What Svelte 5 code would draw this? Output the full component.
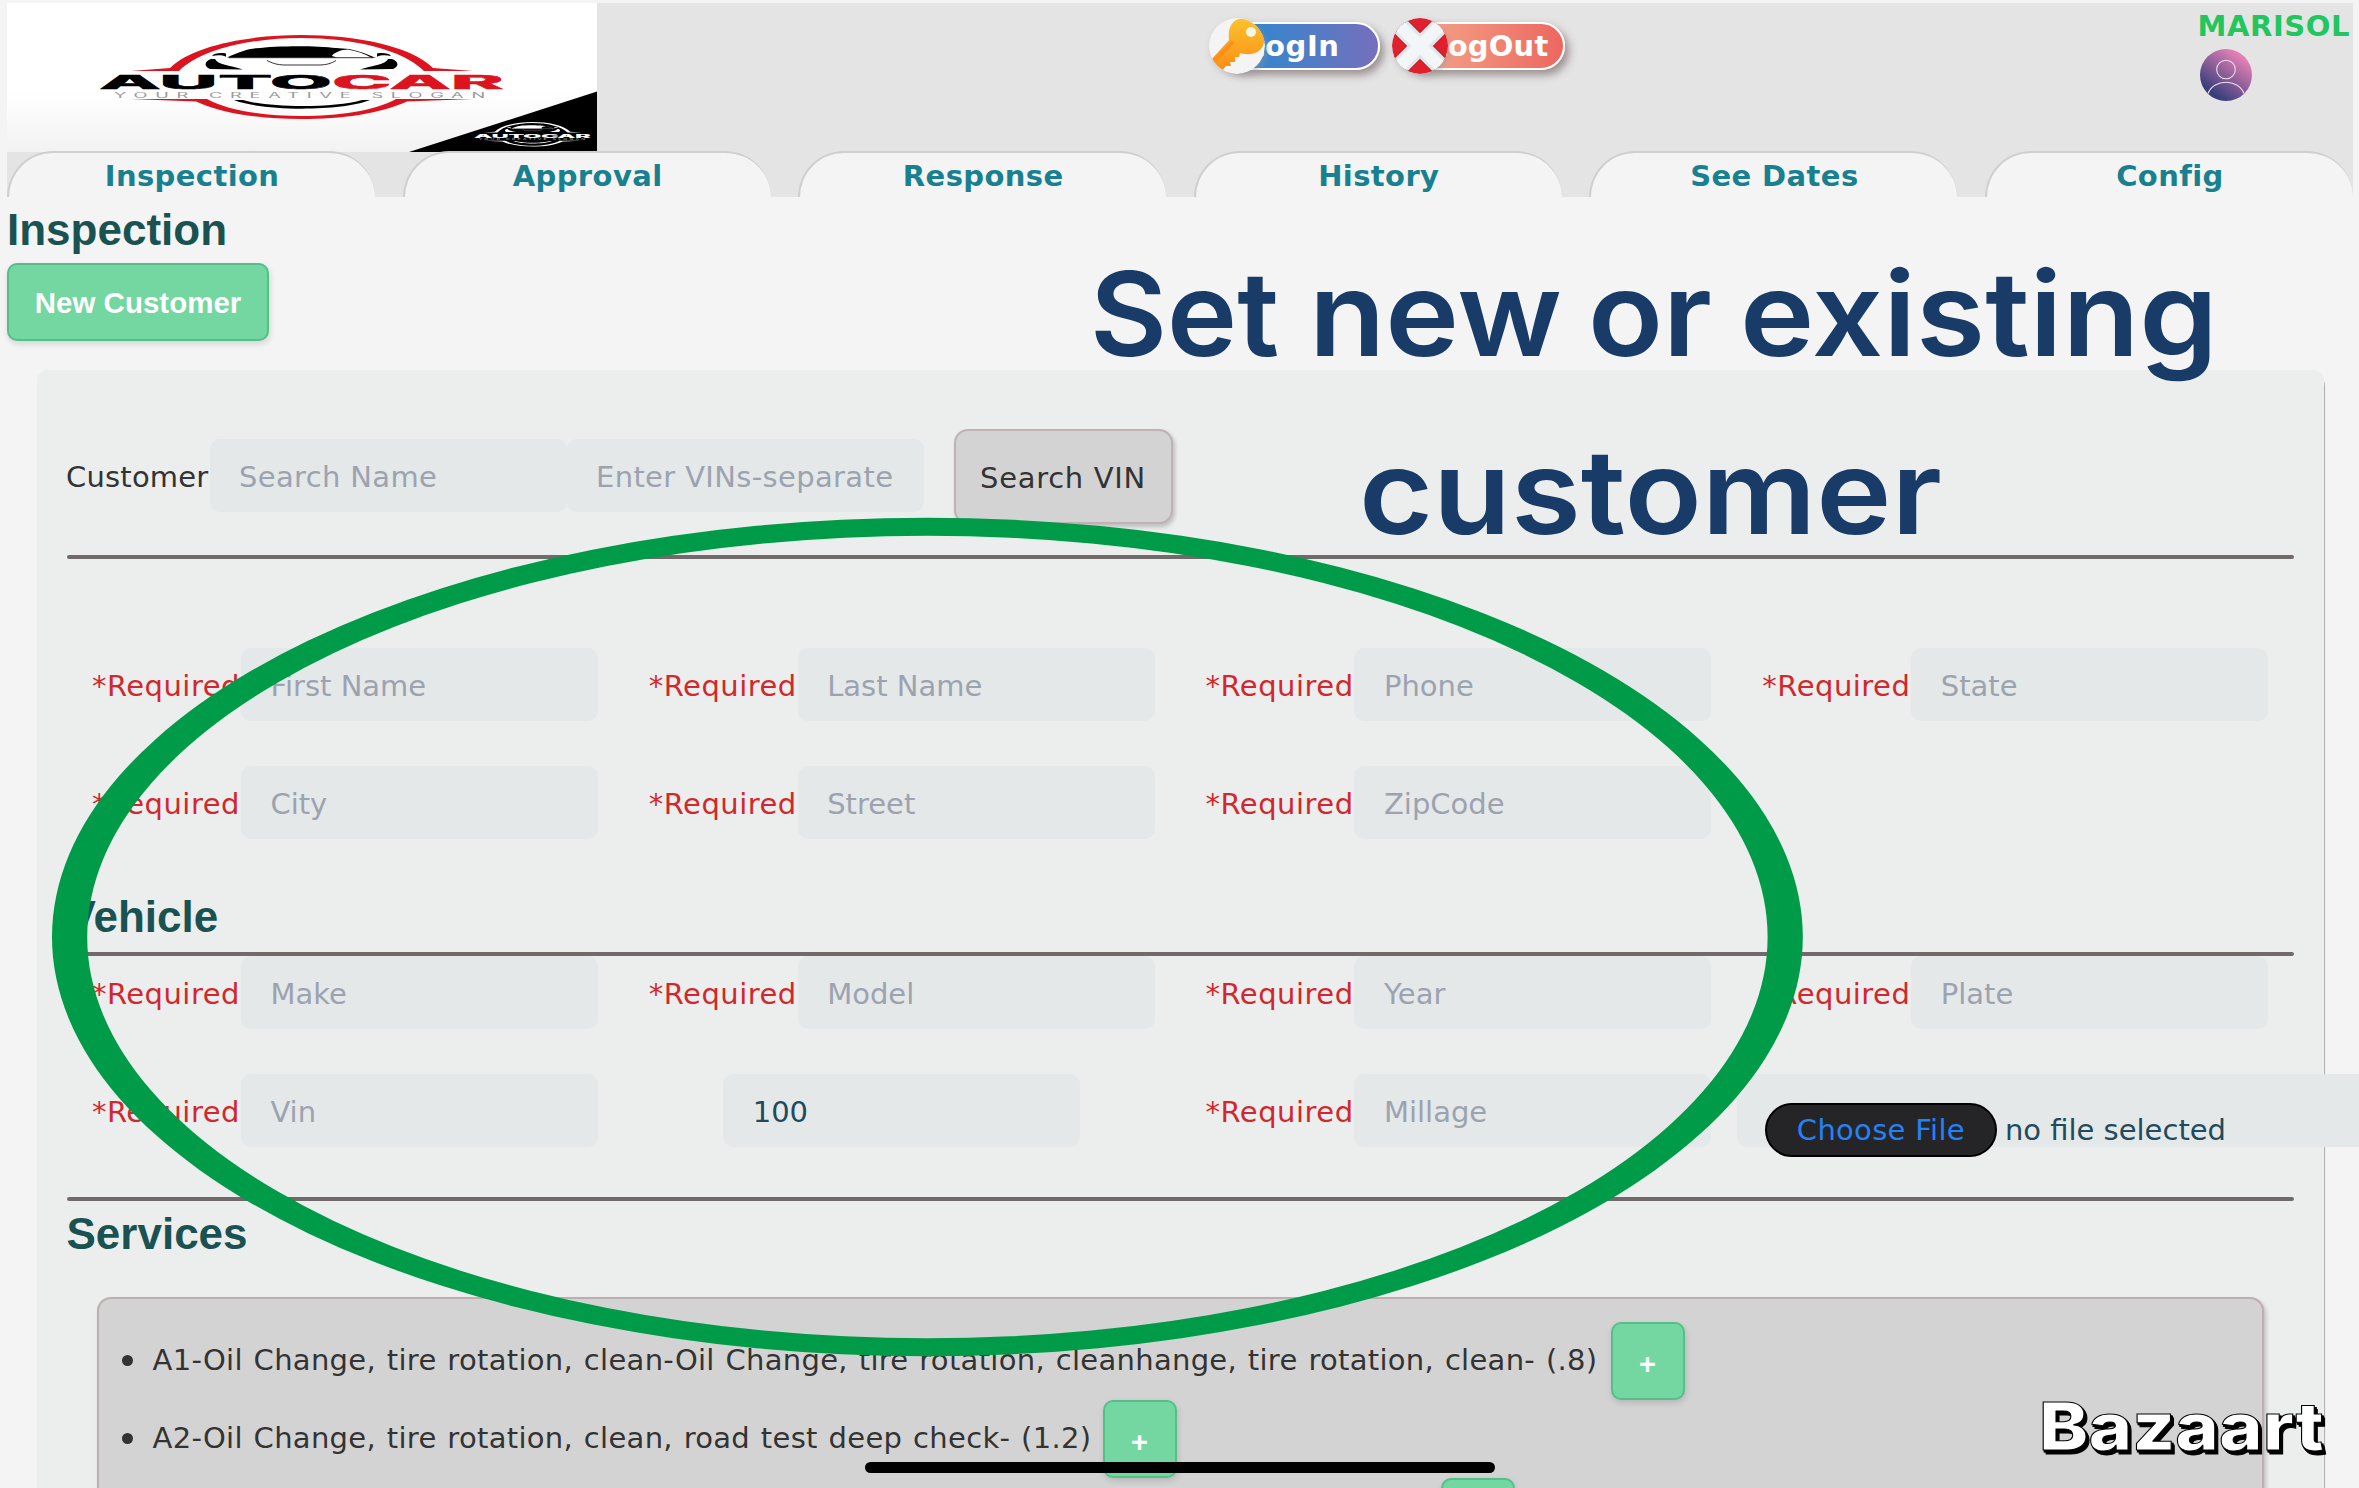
<script>
  const tabs = ['Inspection', 'Approval', 'Response', 'History', 'See Dates', 'Config'];
  const customerFields = ['First Name', 'Last Name', 'Phone', 'State', 'City', 'Street', 'ZipCode'];
  const vehicleFields = ['Make', 'Model', 'Year', 'Plate'];
  const services = [
    { text: 'A1-Oil Change, tire rotation, clean-Oil Change, tire rotation, cleanhange, tire rotation, clean- (.8)', width: 1458, sign: '+' },
    { text: 'A2-Oil Change, tire rotation, clean, road test deep check- (1.2)', width: 950, sign: '+' },
    { text: '', width: 1288, sign: '' }
  ];
</script>

{#snippet mark(ink, accent, muted)}
  <path fill={accent} d="M124 68 L163 65 C185 43 240 32 294.500 32 C349 32 404 43 426 65 L466 68 L417 68 C395 46 345 35 294.500 35 C244 35 194 46 172 68 Z" />
  <path fill={accent} d="M124 96 L200 96 C222 108 258 113 294.500 113 C331 113 367 108 389 96 L466 96 L400 98.500 C372 111 335 116 294.500 116 C254 116 217 111 189 98.500 Z" />
  <path fill={ink} d="M227 97 L236 97 C262 105 328 105 355 97 L363 97 C335 108.500 255 108.500 227 97 Z" />
  <path fill={ink} d="M220 54.500 C230 50 240 46 249 45.300 C270 42.500 310 42.500 329 45 L342 46 C352 48 360 51 369 55 L364 54.500 C358 51 350 48 341 46.500 C334 46.500 326 50 325 53 L330 54.500 Z" />
  <path fill="none" stroke={ink} stroke-width="0.800" d="M222 54.700 H366" />
  <path fill={ink} d="M205 53 C207 50 214 49.500 219 50.500 L219 53.700 C215 52 210 52 205 53 Z M384 53 C382 50 375 49.500 370 50.500 L370 53.700 C374 52 379 52 384 53 Z" />
  <path fill={ink} d="M204 56 C198 58 196 63 203 66 L236 66.500 C222 62 211 62 208 56 Z M385 56 C391 58 393 63 386 66 L353 66.500 C367 62 378 62 381 56 Z" />
  <path fill="none" stroke={ink} stroke-width="0.800" d="M260 57.500 C265 60 270 62 278 62 H312 C320 62 325 60 329 57.500" />
  <text x="92" y="86" class="brand" fill={ink} stroke={ink} textLength="233" lengthAdjust="spacingAndGlyphs">AUTO</text>
  <text x="325" y="86" class="brand" fill={accent} stroke={accent} textLength="172" lengthAdjust="spacingAndGlyphs">CAR</text>
  <text x="107" y="94.500" class="slogan" fill={muted} textLength="379" lengthAdjust="spacingAndGlyphs">YOUR CREATIVE SLOGAN</text>
{/snippet}

<div class="page">
  <header>
    <div class="banner">
      <svg class="logo" viewBox="0 0 590 149" width="590" height="149">
        <defs>
          <linearGradient id="paper" x1="0" y1="0" x2="0" y2="1">
            <stop offset="0.600" stop-color="#fff" /><stop offset="1" stop-color="#f2f2f2" />
          </linearGradient>
        </defs>
        <rect width="590" height="149" fill="url(#paper)" />
        {@render mark('#000', '#dc1420', '#999')}
        <path d="M402 149 L590 88.500 V149 Z" fill="#000" />
        <g transform="translate(441 109.700) scale(.287 .292)">
          {@render mark('#fff', '#fff', '#bbb')}
        </g>
      </svg>
      <div class="actions">
        <button class="pill in">
          <svg class="disc" viewBox="0 0 56 56">
            <defs>
              <clipPath id="round"><circle cx="28" cy="28" r="28" /></clipPath>
              <linearGradient id="gold" x1="0" y1="0" x2="0" y2="1"><stop offset="0" stop-color="#fcc22c" /><stop offset="1" stop-color="#fb8c14" /></linearGradient>
            </defs>
            <circle cx="28" cy="28" r="28" fill="#f4f4f4" />
            <g clip-path="url(#round)">
              <path fill="url(#gold)" d="M20 22 C19 12 21 6 27 2 C32 -1 42 1 50 8 C57 16 56 27 52 31 C46 37 37 37 31 35 L30 39 L26 39 L26 44 L21 44 L22 48 L17 48 L13 53 L2 42 Z" />
              <path fill="none" stroke="#fb8f18" stroke-width="4" d="M24 24 L5 43" />
            </g>
            <circle cx="42" cy="14" r="5" fill="#f7f4ea" />
          </svg>
          <span>LogIn</span>
        </button>
        <button class="pill out">
          <svg class="disc" viewBox="0 0 56 56">
            <circle cx="28" cy="28" r="28" fill="#e0202c" />
            <g clip-path="url(#round)">
              <path d="M4 4 L52 52 M52 4 L4 52" stroke="#b01c28" stroke-width="20" opacity="0.600" />
              <path d="M3 3 L53 53 M53 3 L3 53" stroke="#dfe6ea" stroke-width="18" />
              <path d="M3 3 L53 53 M53 3 L3 53" stroke="#f2f6f8" stroke-width="12" />
            </g>
          </svg>
          <span>LogOut</span>
        </button>
      </div>
      <div class="user">
        <b>MARISOL</b>
        <svg viewBox="0 0 52 52" width="52" height="52">
          <defs>
            <linearGradient id="dusk" x1="0.800" y1="0.100" x2="0.250" y2="0.850"><stop offset="0" stop-color="#ec83b8" /><stop offset="1" stop-color="#383f7c" /></linearGradient>
          </defs>
          <circle cx="26" cy="26" r="26" fill="url(#dusk)" />
          <g fill="none" stroke="#eedcf0" stroke-width="1.100"><circle cx="26" cy="20.500" r="9.300" /><path d="M8 44.500 C14 29.500 38 29.500 44 44.500" /></g>
        </svg>
      </div>
    </div>
    <nav>
      {#each tabs as tab}<a href="#tab">{tab}</a>{/each}
    </nav>
  </header>

  <h2 class="title">Inspection</h2>
  <button class="green new">New Customer</button>

  <main>
    <div class="search">
      <span class="caption">Customer</span>
      <input placeholder="Search Name" />
      <input placeholder="Enter VINs-separate" />
      <button class="grey">Search VIN</button>
    </div>
    <hr />
    <div class="grid customer">
      {#each customerFields as name}
        <div class="field"><span class="req">*Required</span><input placeholder={name} /></div>
      {/each}
    </div>
    <h2 class="vehicle">Vehicle</h2>
    <hr />
    <div class="grid">
      {#each vehicleFields as name}
        <div class="field"><span class="req">*Required</span><input placeholder={name} /></div>
      {/each}
      <div class="field"><span class="req">*Required</span><input placeholder="Vin" /></div>
      <div class="field"><input value="100" /></div>
      <div class="field"><span class="req">*Required</span><input placeholder="Millage" /></div>
      <div class="file"><button>Choose File</button><span>no file selected</span></div>
    </div>
    <hr class="last" />
    <h2 class="heading">Services</h2>
    <ul>
      {#each services as service}
        <li><i></i><span style="width: {service.width}px">{service.text}</span><button class="green plus">{service.sign}</button></li>
      {/each}
    </ul>
  </main>

  <svg class="overlay" viewBox="0 0 2359 1488" width="2359" height="1488">
    <path fill="#009b48" fill-rule="evenodd" d="M52 937 a875.400 419.200 0 1 0 1750.800 0 a875.400 419.200 0 1 0 -1750.800 0 Z M87.200 937 a840.200 401.300 0 1 0 1680.400 0 a840.200 401.300 0 1 0 -1680.400 0 Z" />
    <g class="note">
      <text x="1090" y="355.500" textLength="189" lengthAdjust="spacingAndGlyphs">Set</text>
      <text x="1309" y="355.500" textLength="253" lengthAdjust="spacingAndGlyphs">new</text>
      <text x="1588" y="355.500" textLength="124" lengthAdjust="spacingAndGlyphs">or</text>
      <text x="1740" y="355.500" textLength="478" lengthAdjust="spacingAndGlyphs">existing</text>
      <text x="1359" y="534" textLength="583" lengthAdjust="spacingAndGlyphs">customer</text>
    </g>
    <rect x="865" y="1462" width="630" height="11" rx="5.500" fill="#000" />
    <text class="stamp" x="2039" y="1450" textLength="285" lengthAdjust="spacingAndGlyphs">Bazaart</text>
  </svg>
</div>

<style>
  :global(body) { background: #f4f4f4; overflow: hidden; }
  * { box-sizing: border-box; }
  .page { position: relative; width: 2359px; height: 1488px; overflow: hidden; padding: 3px 6px 0 7px; font: 29px "DejaVu Sans", Verdana, sans-serif; color: #333; background: #f4f4f4; }
  button, input { font: inherit; margin: 0; border: 0; }
  header { background: #e4e4e4; height: 194px; }
  .banner { display: flex; height: 148px; }
  .logo { display: block; }
  .brand { font: 800 18.5px Inter, sans-serif; stroke-width: 0.4px; }
  .slogan { font: 7px Inter, sans-serif; letter-spacing: 3px; }
  .actions { display: flex; gap: 22px; padding: 19px 0 0 622px; height: 70px; }
  .pill { position: relative; height: 48px; padding: 0 0 0 22px; text-align: left; border: 2px solid #fff; border-radius: 24px; color: #fff; font-weight: bold; box-shadow: 4px 5px 8px #9b8f8f; }
  .pill span { position: relative; left: 3px; letter-spacing: 0.6px; }
  .in { width: 161px; background: linear-gradient(90deg, #3287cf 20%, #766fbb); }
  .out { width: 163px; background: linear-gradient(90deg, #f6ab8d, #ec675f); }
  .out span { letter-spacing: 0.2px; }
  .disc { position: absolute; z-index: 1; left: -12px; top: -6px; width: 56px; height: 56px; border-radius: 50%; box-shadow: 2px 3px 6px #9997; }
  .user { margin-left: auto; width: 153.500px; white-space: nowrap; line-height: 34px; color: #22c55e; }
  .user b { display: block; height: 46px; padding-top: 6px; margin-left: -2px; letter-spacing: 0.6px; }
  .user svg { display: block; }
  nav { display: grid; grid-template-columns: repeat(6, 1fr); gap: 27.5px; }
  nav a { height: 46px; border-top: 2px solid #cfcfcf; border-left: 2px solid #cfcfcf; border-radius: 46px 46px 0 0; background: #f4f4f4; color: #18808e; font-weight: bold; text-align: center; text-decoration: none; line-height: 46px; letter-spacing: 0.4px; }
  h2 { margin: 0; font: bold 44px/50px "Liberation Sans", Arial, sans-serif; color: #1a5252; }
  .title { padding-top: 8px; height: 66px; }
  .green { display: block; background: #74d6a0; border: 2px solid #54c088; border-radius: 10px; color: #fff; font: bold 29px "Liberation Sans", Arial, sans-serif; box-shadow: 1px 3px 6px #0002; }
  .new { width: 262px; height: 78px; padding: 2px 0 0; font-size: 29.5px; }
  main { margin: 29px 0 0 29.5px; width: 2287px; height: 1300px; padding: 59px 30px 0; background: #ebeeed; border-radius: 10px; box-shadow: 2px 6px 1px -1px #aaa; }
  .search { display: flex; align-items: flex-start; height: 126px; margin-left: -0.5px; }
  .caption { width: 143.5px; line-height: 34px; padding-top: 31px; white-space: nowrap; letter-spacing: 0.2px; }
  input { width: 357px; height: 73px; margin: 0; padding: 3px 0 0 29.5px; background: #e4e8e9; border-radius: 10px; color: #214a5c; outline: 0; }
  .search input { margin-top: 10px; letter-spacing: 0.35px; }
  input::placeholder { color: #9ca3af; opacity: 1; }
  .grey { width: 219px; height: 95px; margin-left: 30px; padding: 2px 0 0; color: #333; background: #d3d3d3; border: 2px solid #c2b1b2; border-radius: 14px; box-shadow: 2px 3px 4px #0003; letter-spacing: 0.7px; }
  hr { height: 4px; margin: 0; border: 0; border-radius: 2px; background: #716a6b; }
  .grid { display: grid; grid-template-columns: repeat(4, 556.8px); grid-auto-rows: 73px; row-gap: 45px; }
  .customer { padding-top: 89px; }
  .field { display: flex; justify-content: center; }
  .req { width: 149px; color: #d0282e; line-height: 34px; padding-top: 21px; letter-spacing: 0.5px; white-space: nowrap; }
  .vehicle { height: 113px; padding-top: 53px; }
  .file { display: flex; align-items: center; width: 640px; height: 73px; padding: 38px 0 0 28px; background: #e4e8e9; border-radius: 10px; color: #214a5c; white-space: nowrap; }
  .file button { width: 232px; height: 54px; margin-right: 8px; padding: 0; color: #2482f4; background: #252527; border: 2px solid #000; border-radius: 27px; letter-spacing: 0.3px; }
  .file span { padding-top: 1px; }
  .last { margin-top: 50px; }
  .heading { height: 96px; padding-top: 8px; }
  ul { margin: 0 30px; height: 300px; padding: 23px 0 0 23px; list-style: none; background: #d3d3d3; border: 2px solid #bfaeb0; border-radius: 14px; box-shadow: 2px 3px 4px #0003; }
  li { display: flex; height: 78px; }
  li i { width: 11px; height: 11px; margin: 33px 20px 0 0; border-radius: 50%; background: #333; }
  li span { flex: none; height: 60px; padding-top: 20.5px; line-height: 34px; white-space: nowrap; letter-spacing: 0.3px; word-spacing: 1.3px; }
  .plus { width: 74px; height: 78px; padding: 6px 0 0; }
  .overlay { position: absolute; left: 0; top: 0; pointer-events: none; }
  .note { font: 600 117px Inter, sans-serif; fill: #193b68; }
  .stamp { font: 800 66px Inter, sans-serif; fill: #fff; stroke: #000; stroke-width: 1px; filter: drop-shadow(2px 2px 0 #000) drop-shadow(1px 2px 0 #000); }
</style>
